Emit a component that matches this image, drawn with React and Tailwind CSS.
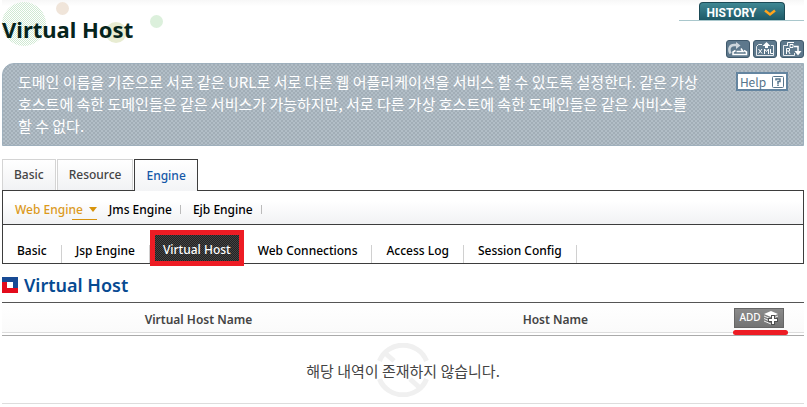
const FONT = "font-['Noto_Sans','Noto_Sans_CJK_KR',sans-serif]";
const KOREAN = "font-['Noto_Sans_CJK_KR',sans-serif]";

const mainTabs = ["Basic", "Resource", "Engine"];
const engineMenu = ["Jms Engine", "Ejb Engine"];
const webMenu = ["Basic", "Jsp Engine", "Virtual Host", "Web Connections", "Access Log", "Session Config"];

const iconButton = "flex h-[18px] w-6 items-center justify-center rounded-[3px] border border-[#3f596c] bg-[#5d788c]";

const HeaderDots = () => (
  <svg className="absolute -left-0.5 top-0" width="180" height="50" aria-hidden="true">
    <defs>
      <pattern id="dots" width="2" height="2" patternUnits="userSpaceOnUse">
        <rect width="1" height="1" fill="#cfe9d2" />
        <rect x="1" y="1" width="1" height="1" fill="#cfe9d2" />
      </pattern>
    </defs>
    <circle cx="24" cy="24" r="22" fill="url(#dots)" />
    <circle cx="62.5" cy="8.5" r="6.5" fill="#f0e5da" />
    <circle cx="116" cy="32.5" r="10.5" fill="#e8ecd2" />
    <circle cx="156.5" cy="21.5" r="6.5" fill="#dcf0dc" />
  </svg>
);

const ExportIcon = () => (
  <svg width="20" height="14" viewBox="0 0 20 14" fill="none" aria-hidden="true">
    <path d="M2.5 11.5C0 7 2 3 6 3H9" stroke="#cdd6dc" strokeWidth="2.5" />
    <path d="M8 0l4.5 3.5L8 7z" fill="#cdd6dc" />
    <path d="M7.5 8.5L5 10v2.5h13.5V10L16 8.5" stroke="#fff" strokeWidth="1.5" />
    <path d="M8.5 9.5h6.5L13 6.5" stroke="#fff" strokeWidth="1.5" />
  </svg>
);

const XmlIcon = () => (
  <svg width="20" height="14" viewBox="0 0 20 14" fill="none" stroke="#fff" aria-hidden="true">
    <path d="M7 2.5H3.5L1.5 4.5v9h17v-10H16" strokeOpacity=".85" />
    <path d="M11.5 0L7.5 4H10v2h3V4h2.5z" fill="#fff" stroke="none" />
    <path d="M3.5 7l3.5 4.500M7 7l-3.5 4.5M9.5 12V7l2 2.5 2-2.5v5M15.5 7v4.5H18" />
  </svg>
);

const ReportIcon = () => (
  <svg width="20" height="14" viewBox="0 0 20 14" fill="none" stroke="#fff" aria-hidden="true">
    <path d="M5 3.5H1.5v10h11V11" strokeOpacity=".85" />
    <path d="M4.5 12V6.5H7.5v2.5H4.5M6.5 9L8 12M5.5 4V.5H12M8 2.5h3v3H8z" />
    <path d="M12 4.5h4V10" strokeWidth="1.5" />
    <path d="M12.5 9h7L16 13.5z" fill="#fff" stroke="none" />
  </svg>
);

const HelpIcon = () => (
  <svg width="12" height="12" viewBox="0 0 12 12" fill="none" stroke="#56758c" aria-hidden="true">
    <rect x=".5" y=".5" width="11" height="11" rx="1" />
    <path d="M4 4.5V3h4v2.5H6V8M6 8.5V10" strokeWidth="1.5" />
  </svg>
);

const AddIcon = () => (
  <svg width="15" height="14" viewBox="0 0 15 14" aria-hidden="true">
    <path d="M7 0l7 3-7 3-7-3z" fill="#fff" />
    <path d="M0 5l7 3 7-3M0 7.5l7 3 7-3M0 10l7 3 4-1.5" fill="none" stroke="#eee" />
    <path d="M7 4h4v3h3v4h-3v3H7v-3H4V7h3z" fill="#505050" />
    <path d="M8 5h2v3h3v2h-3v3H8v-3H5V8h3z" fill="#fff" />
  </svg>
);

const ForbiddenMark = () => (
  <svg className="absolute left-1/2 top-1/2 -translate-x-1/2 -translate-y-1/2" width="54" height="54" viewBox="0 0 54 54" fill="none" stroke="#f0f0f0" strokeWidth="5" aria-hidden="true">
    <path d="M3.5 18a25 24 0 0 1 47 0M3.5 36a25 24 0 0 0 47 0M9 10l9 8M34 36l10 9" />
  </svg>
);

const Header = () => (
  <header className="relative flex h-[63px] justify-between bg-linear-to-b from-[#f7f7f7] to-white to-10%">
    <HeaderDots />
    <h1 className="relative pt-3 text-[22px] leading-[34px] font-bold text-[#06241c]">Virtual Host</h1>
    <div className="relative flex flex-col items-end justify-between pt-0.5 pb-[5px]">
      <div className="flex w-[125px] justify-center border-b border-[#a9c7cc]">
        <button className="flex h-[18px] w-[86px] items-center justify-center gap-2 rounded-t-sm border border-b-0 border-[#1b4a56] bg-linear-to-b from-[#3f8793] to-[#1d5967] pt-0.5 font-['Roboto',sans-serif] text-xs font-bold text-white">
          HISTORY
          <svg width="12" height="8" viewBox="0 0 12 8" aria-hidden="true">
            <path d="M1 1.5l5 4 5-4" fill="none" stroke="#ffa41c" strokeWidth="2.5" />
          </svg>
        </button>
      </div>
      <div className="flex gap-[3px]">
        <button className={iconButton} aria-label="Export"><ExportIcon /></button>
        <button className={iconButton} aria-label="XML"><XmlIcon /></button>
        <button className={iconButton} aria-label="Report"><ReportIcon /></button>
      </div>
    </div>
  </header>
);

const Description = () => (
  <section className={`${KOREAN} flex items-start justify-between gap-2 rounded-tl-xl border border-[#9fb0bd] bg-[#b0bcc5] bg-[conic-gradient(#a2aeb7_25%,#b2bec7_0_50%,#a2aeb7_0_75%,#b2bec7_0)] bg-size-[4px_4px] px-[15px] pt-[7px] pb-2`}>
    <p className="max-w-[684px] text-[15px] leading-[22px] break-keep text-white">
      도메인 이름을 기준으로 서로 같은 URL로 서로 다른 웹 어플리케이션을 서비스 할 수 있도록 설정한다. 같은 가상 호스트에 속한 도메인들은 같은 서비스가 가능하지만, 서로 다른 가상 호스트에 속한 도메인들은 같은 서비스를 할 수 없다.
    </p>
    <button className="mt-px flex h-[19px] w-[52px] shrink-0 items-center justify-center gap-1.5 border-2 border-[#6485a0] bg-white text-xs text-[#56758c]">
      Help <HelpIcon />
    </button>
  </section>
);

const Tabs = () => (
  <nav className="mt-[13px] text-xs font-medium">
    <div className="relative -mb-px flex h-8 gap-px">
      {mainTabs.map((tab) => (
        <a
          key={tab}
          href="#"
          className={
            tab === "Engine"
              ? "flex items-center border border-b-0 border-[#3d3d3d] bg-linear-to-b from-white to-[#f3f4f6] px-[11px] text-[#1458a8]"
              : "mb-px flex items-center border border-b-0 border-[#d4d4d4] bg-linear-to-b from-white to-[#f1f2f4] px-[11px] text-[#444]"
          }
        >
          {tab}
        </a>
      ))}
    </div>
    <div className="border border-[#3d3d3d]">
      <div className="flex h-[34px] items-center border-b border-[#3d3d3d] bg-linear-to-b from-white from-30% to-[#f1f2f4] pt-1 pl-3 text-black">
        <a href="#" className="relative flex items-center gap-1.5 pr-3 text-[#dc9a1c]">
          Web Engine
          <svg width="8" height="5" aria-hidden="true"><path d="M0 0h8L4 5z" fill="#d8940c" /></svg>
          <span className="absolute right-3 -bottom-0.5 w-[25px] border-b border-[#d8940c]" />
        </a>
        {engineMenu.map((item) => (
          <div key={item} className="flex items-center">
            <a href="#">{item}</a>
            <span className="mr-3 ml-2 h-[9px] border-r border-[#bbb]" />
          </div>
        ))}
      </div>
      <div className="flex h-[38px] items-end text-black">
        {webMenu.map((item) =>
          item === "Virtual Host" ? (
            <a key={item} href="#" className="relative -mb-[3px] flex h-9 items-center border-[5px] border-[#ed1c24] bg-[#333] bg-[conic-gradient(#222_25%,#444_0_50%,#222_0_75%,#444_0)] bg-size-[2px_2px] px-2 pt-1 text-white">
              {item}
            </a>
          ) : (
            <div key={item} className="flex h-[18px] items-center border-r border-[#d0d0d0] px-[14px] pb-1.5">
              <a href="#">{item}</a>
            </div>
          )
        )}
      </div>
    </div>
  </nav>
);

const HostTable = () => (
  <section>
    <h2 className="flex h-[38px] items-center gap-1.5 pt-1 text-lg font-semibold text-[#064a92]">
      <svg width="16" height="16" aria-hidden="true">
        <path d="M0 0h16v11H11V5H0z" fill="#174a94" />
        <path d="M0 5h5v6h11v5H0z" fill="#e30b1c" />
        <path d="M5 5h6v6H5z" fill="#fff" />
      </svg>
      Virtual Host
    </h2>
    <table className="w-full table-fixed border-separate border-spacing-0">
      <colgroup>
        <col className="w-[49%]" />
        <col className="w-[40%]" />
        <col className="w-[11%]" />
      </colgroup>
      <thead>
        <tr className="h-[31px] bg-linear-to-b from-white to-[#fafafa] text-xs text-[#444] *:border-t *:border-b *:border-t-[#555] *:border-b-[#ddd]">
          <th className="p-0 pt-1 font-semibold">Virtual Host Name</th>
          <th className="p-0 pt-1 font-semibold">Host Name</th>
          <th className="p-0">
            <div className="relative mr-5 ml-auto w-[50px]">
              <button className="flex h-5 w-[50px] items-center justify-center gap-[3px] border border-[#666] bg-linear-to-b from-[#8b8b8b] to-[#737373] text-[10px] font-medium text-white">
                ADD <AddIcon />
              </button>
              <span className="absolute top-[22px] -left-px h-[5px] w-[55px] rounded-full bg-[#ed1c24]" />
            </div>
          </th>
        </tr>
      </thead>
      <tbody>
        <tr>
          <td colSpan={3} className="border-b border-[#ddd] p-0 pt-0.5 text-center text-[#444]">
            <div className="relative flex h-[68px] items-center justify-center border-t border-[#aaa] pt-1">
              <ForbiddenMark />
              <span className={`${KOREAN} relative text-[15px]`}>해당 내역이 존재하지 않습니다.</span>
            </div>
          </td>
        </tr>
      </tbody>
    </table>
  </section>
);

export default function App() {
  return (
    <main className={`${FONT} bg-white pr-[3px] pl-0.5`}>
      <Header />
      <Description />
      <Tabs />
      <HostTable />
    </main>
  );
}
